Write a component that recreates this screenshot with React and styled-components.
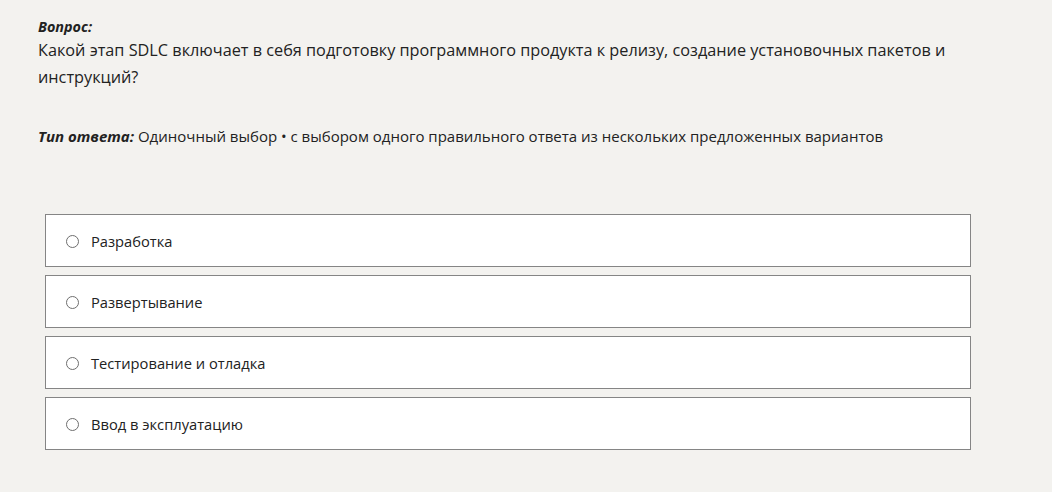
import React from "react";
import styled, { createGlobalStyle } from "styled-components";

const Global = createGlobalStyle`
  html, body {
    margin: 0;
    padding: 0;
    background: #f3f2ef;
  }
  body {
    font-family: "Open Sans", "Noto Sans", sans-serif;
    color: #222;
  }
`;

const Page = styled.div`
  padding: 17px 38px 0 38px;
  width: 1052px;
  box-sizing: border-box;
`;

const Label = styled.div`
  font-size: 14.4px;
  font-weight: 700;
  font-style: italic;
  line-height: 20px;
  color: #222;
`;

const Question = styled.div`
  font-size: 16.25px;
  line-height: 27px;
  max-width: 932px;
`;

const AnswerType = styled.div`
  margin-top: 34px;
  font-size: 15px;
  line-height: 22px;
  b {
    font-weight: 700;
    font-style: italic;
  }
`;

const Options = styled.div`
  margin: 67px 0 0 7px;
  width: 926px;
  display: flex;
  flex-direction: column;
  gap: 8px;
`;

const Option = styled.label`
  display: flex;
  align-items: center;
  gap: 12px;
  height: 53px;
  box-sizing: border-box;
  padding: 1px 0 0 20px;
  background: #fff;
  border: 1px solid #858585;
  font-size: 14.7px;
  color: #222;
  cursor: pointer;
`;

const Radio = styled.span`
  width: 11px;
  height: 11px;
  border: 1px solid #6e6e6e;
  border-radius: 50%;
  flex: none;
`;

const answers = [
  "Разработка",
  "Развертывание",
  "Тестирование и отладка",
  "Ввод в эксплуатацию",
];

export default function App() {
  return (
    <>
      <Global />
      <Page>
        <Label>Вопрос:</Label>
        <Question>
          Какой этап SDLC включает в себя подготовку программного продукта к
          релизу, создание установочных пакетов и инструкций?
        </Question>
        <AnswerType>
          <b>Тип ответа:</b> Одиночный выбор • с выбором одного правильного
          ответа из нескольких предложенных вариантов
        </AnswerType>
        <Options>
          {answers.map((a) => (
            <Option key={a}>
              <Radio />
              {a}
            </Option>
          ))}
        </Options>
      </Page>
    </>
  );
}
